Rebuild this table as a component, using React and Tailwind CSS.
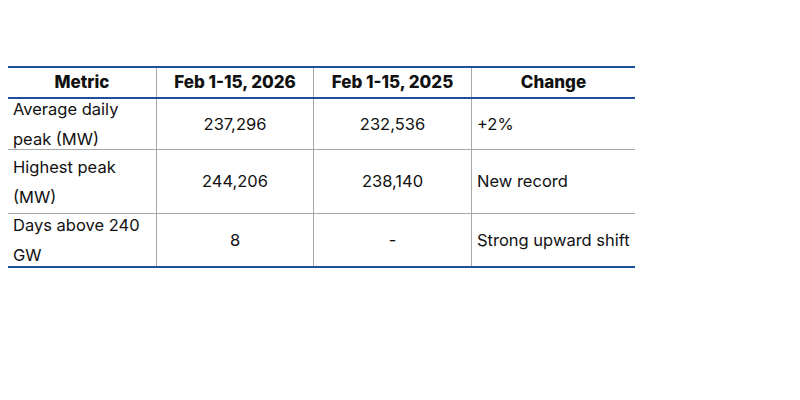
export default function App() {
  const rows = [
    { metric: ["Average daily", "peak (MW)"], a: "237,296", b: "232,536", change: "+2%", h: "h-[51px]" },
    { metric: ["Highest peak", "(MW)"], a: "244,206", b: "238,140", change: "New record", h: "h-[64px]" },
    { metric: ["Days above 240", "GW"], a: "8", b: "-", change: "Strong upward shift", h: "h-[52px]" },
  ];

  return (
    <div className="w-[800px] h-[400px] bg-white pt-[66px] pl-2 text-[#111] font-['Inter',sans-serif] text-[16.5px]">
      <div className="w-[627px] border-t-2 border-b-2 border-[#1f4f9a]">
        {/* header */}
        <div className="flex h-[31px] border-b-2 border-[#1f4f9a] font-extrabold text-[17px]">
          <div className="w-[149px] flex items-center justify-center border-r border-[#a8a8a8]">Metric</div>
          <div className="w-[157px] flex items-center justify-center border-r border-[#a8a8a8]">Feb 1-15, 2026</div>
          <div className="w-[158px] flex items-center justify-center border-r border-[#a8a8a8]">Feb 1-15, 2025</div>
          <div className="flex-1 flex items-center justify-center">Change</div>
        </div>

        {rows.map((r, i) => (
          <div
            key={i}
            className={`flex ${r.h} ${i < rows.length - 1 ? "border-b border-[#a8a8a8]" : ""}`}
          >
            <div className="w-[149px] flex items-center pl-[5px] border-r border-[#a8a8a8]">
              <div className="leading-[30px] shrink-0">
                <div>{r.metric[0]}</div>
                <div>{r.metric[1]}</div>
              </div>
            </div>
            <div className="w-[157px] flex items-center justify-center border-r border-[#a8a8a8]">{r.a}</div>
            <div className="w-[158px] flex items-center justify-center border-r border-[#a8a8a8]">{r.b}</div>
            <div className="flex-1 flex items-center pl-[5px] whitespace-nowrap">{r.change}</div>
          </div>
        ))}
      </div>
    </div>
  );
}
